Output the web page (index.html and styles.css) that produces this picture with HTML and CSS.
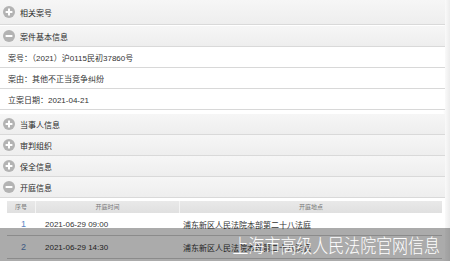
FILE: index.html
```html
<!DOCTYPE html>
<html lang="zh-CN">
<head>
<meta charset="UTF-8" />
<title>案件信息</title>
<link rel="stylesheet" href="styles.css">
</head>
<body>
<div class="wrap">
  <div class="section first">
    <div class="sec-head">
      <svg class="ico" viewBox="0 0 12 12"><circle cx="6" cy="6" r="6" fill="#b3b3b3"/><path d="M2.6 6h6.8M6 2.6v6.8" stroke="#fff" stroke-width="2"/></svg>
      相关案号
    </div>
  </div>

  <div class="section">
    <div class="sec-head">
      <svg class="ico" viewBox="0 0 12 12"><circle cx="6" cy="6" r="6" fill="#b3b3b3"/><path d="M2.6 6h6.8" stroke="#fff" stroke-width="2"/></svg>
      案件基本信息
    </div>
    <div class="info">
      <div class="info-row">案号：（2021）沪0115民初37860号</div>
      <div class="info-row">案由：其他不正当竞争纠纷</div>
      <div class="info-row">立案日期：2021-04-21</div>
    </div>
  </div>

  <div class="section">
    <div class="sec-head">
      <svg class="ico" viewBox="0 0 12 12"><circle cx="6" cy="6" r="6" fill="#b3b3b3"/><path d="M2.6 6h6.8M6 2.6v6.8" stroke="#fff" stroke-width="2"/></svg>
      当事人信息
    </div>
  </div>
  <div class="section">
    <div class="sec-head">
      <svg class="ico" viewBox="0 0 12 12"><circle cx="6" cy="6" r="6" fill="#b3b3b3"/><path d="M2.6 6h6.8M6 2.6v6.8" stroke="#fff" stroke-width="2"/></svg>
      审判组织
    </div>
  </div>
  <div class="section">
    <div class="sec-head">
      <svg class="ico" viewBox="0 0 12 12"><circle cx="6" cy="6" r="6" fill="#b3b3b3"/><path d="M2.6 6h6.8M6 2.6v6.8" stroke="#fff" stroke-width="2"/></svg>
      保全信息
    </div>
  </div>

  <div class="section">
    <div class="sec-head">
      <svg class="ico" viewBox="0 0 12 12"><circle cx="6" cy="6" r="6" fill="#b3b3b3"/><path d="M2.6 6h6.8" stroke="#fff" stroke-width="2"/></svg>
      开庭信息
    </div>
    <div class="hearings">
      <div class="tr th">
        <div>序号</div>
        <div>开庭时间</div>
        <div>开庭地点</div>
      </div>
      <div class="tr">
        <div class="num">1</div>
        <div class="time">2021-06-29 09:00</div>
        <div class="place">浦东新区人民法院本部第二十八法庭</div>
      </div>
      <div class="tr">
        <div class="num">2</div>
        <div class="time">2021-06-29 14:30</div>
        <div class="place">浦东新区人民法院本部第二十八法庭</div>
      </div>
    </div>
  </div>
</div>

<div class="watermark"><span>上海市高级人民法院官网信息</span></div>
</body>
</html>
```

FILE: styles.css
```css
html, body {
  margin: 0; padding: 0; height: 261px; overflow: hidden;
}
body {
  background: linear-gradient(to right, #fff 443px, #ececec 450px);
  font-family: "Liberation Sans", "Noto Sans CJK SC", sans-serif;
  color: #333; font-size: 8px;
}
.wrap {
  width: 445px;
}
.section.first {
  margin-bottom: 1px;
}
.section.first .sec-head {
  height: 24px;
}
.sec-head {
  display: flex; align-items: center; gap: 5px;
  height: 20px; padding-left: 3px;
  background: linear-gradient(#f6f6f6, #eeeeee);
  border-bottom: 1px solid #d9d9d9;
  color: #2a2a2a; font-size: 8px;
}
.ico {
  width: 12px; height: 12px; flex: none;
}
.info {
  background: #fff; margin-bottom: 4px;
}
.info-row {
  display: flex; align-items: center;
  height: 20px; padding-left: 8px;
  border-bottom: 1px solid #d8d8d8;
}
.hearings {
  background: #fff; padding: 3px 3px 0 7px;
}
.tr {
  display: grid; grid-template-columns: 28px 144px 1fr;
  height: 22px; align-items: center;
  border-bottom: 1px solid #d0d0d0;
}
.tr.th {
  height: 12px; border-bottom: none;
  background: linear-gradient(#e9e9e9, #e0e0e0);
  color: #777; font-size: 6px; text-align: center;
}
.tr.th div {
  border-left: 1px solid #f4f4f4;
  line-height: 12px;
}
.tr.th div:first-child {
  border-left: none;
}
.num {
  text-align: center; color: #5b86c4; font-size: 9px; padding-left: 5px;
}
.time {
  padding-left: 10px;
}
.place {
  padding-left: 4px;
}
.watermark {
  position: absolute; left: 0; top: 228px;
  width: 450px; height: 33px;
  background: rgba(0, 0, 0, 0.33);
  display: flex; align-items: center; justify-content: flex-end;
  color: #fff; font-size: 19px;
  font-family: "Noto Sans CJK SC", sans-serif; font-weight: 300;
  box-sizing: border-box; padding-right: 10px;
}
.watermark span {
  display: inline-block; white-space: nowrap;
  transform: scaleX(0.84); transform-origin: right center;
}
```
